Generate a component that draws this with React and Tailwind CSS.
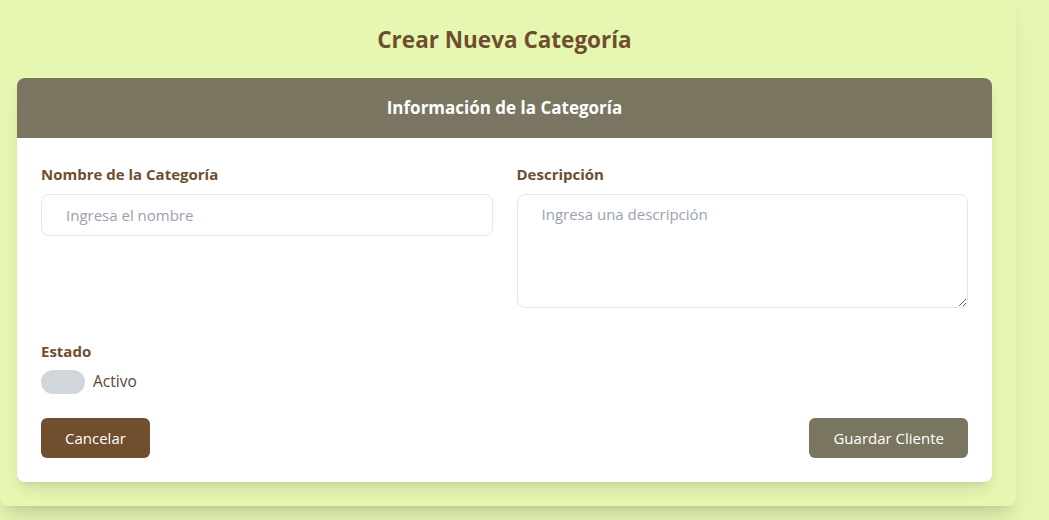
export default function App() {
  return (
    <div className="min-h-[520px] w-full bg-[#e6f7b3] overflow-hidden" style={{ fontFamily: '"Open Sans", "Noto Sans", sans-serif' }}>
      <div className="w-[1016px] -mt-2 pt-8 pb-6 pl-[17px] pr-6 bg-[#e6f7b2] rounded-lg shadow-xl">
        <h1 className="text-center text-[22.5px] leading-8 font-bold text-[#6f4e2e] mb-[22px]">Crear Nueva Categoría</h1>
        <div className="bg-white rounded-lg shadow-lg overflow-hidden">
          <div className="h-[60px] bg-[#7a7560] flex items-center justify-center">
            <h2 className="text-white text-[17px] font-bold">Información de la Categoría</h2>
          </div>
          <div className="p-6">
            <div className="grid grid-cols-2 gap-6">
              <div>
                <label className="block text-[#6f4e2e] font-bold text-[15px] leading-6 mb-2">Nombre de la Categoría</label>
                <input
                  type="text"
                  placeholder="Ingresa el nombre"
                  className="w-full h-[42px] border border-gray-200 rounded-lg px-6 text-[15px] text-gray-700 placeholder:text-gray-400 outline-none"
                />
              </div>
              <div>
                <label className="block text-[#6f4e2e] font-bold text-[15px] leading-6 mb-2">Descripción</label>
                <textarea
                  placeholder="Ingresa una descripción"
                  className="block w-full h-[114px] border border-gray-200 rounded-lg px-6 py-2 text-[15px] text-gray-700 placeholder:text-gray-400 outline-none"
                />
              </div>
            </div>
            <div className="mt-[31px]">
              <label className="block text-[#6f4e2e] font-bold text-[15px] leading-6 mb-[7px]">Estado</label>
              <div className="flex items-center gap-2">
                <div className="w-11 h-6 rounded-full bg-gray-300" />
                <span className="text-[#5c4330] text-[15.5px]">Activo</span>
              </div>
            </div>
            <div className="mt-6 flex justify-between">
              <button className="h-10 px-6 rounded-md bg-[#714e2e] text-white text-[15px]">Cancelar</button>
              <button className="h-10 px-6 rounded-md bg-[#7a7560] text-white text-[15px]">Guardar Cliente</button>
            </div>
          </div>
        </div>
      </div>
    </div>
  );
}
